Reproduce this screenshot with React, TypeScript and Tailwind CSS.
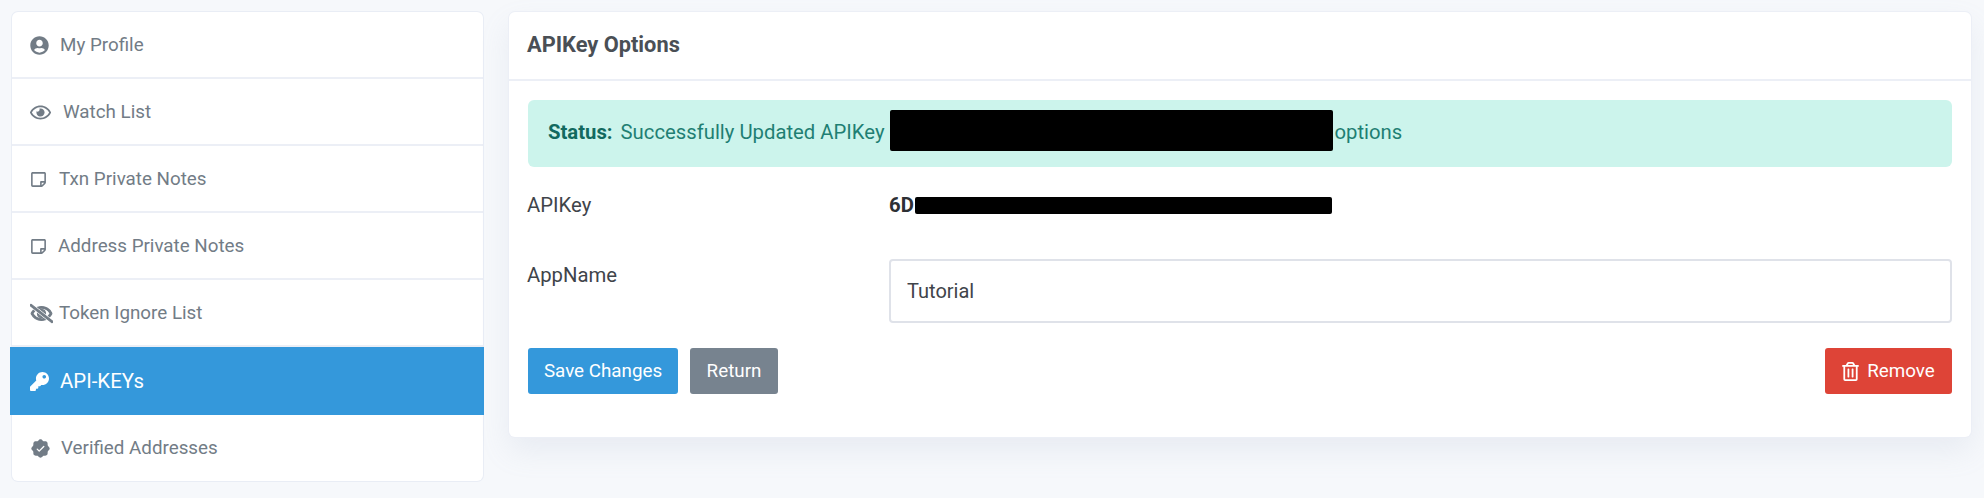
import React from "react";
import { FaUserCircle, FaRegEye, FaRegStickyNote, FaRegEyeSlash, FaKey, FaRegTrashAlt } from "react-icons/fa";
import { PiSealCheckFill } from "react-icons/pi";

const items = [
  { label: "My Profile", icon: <FaUserCircle className="h-[19px] w-[19px]" />, gap: "gap-[11px]", h: "h-[67px]" },
  { label: "Watch List", icon: <FaRegEye className="h-[21px] w-[21px]" />, gap: "gap-[12px]", h: "h-[67px]" },
  { label: "Txn Private Notes", icon: <FaRegStickyNote className="h-[17px] w-[17px]" />, gap: "gap-[12px]", h: "h-[67px]" },
  { label: "Address Private Notes", icon: <FaRegStickyNote className="h-[17px] w-[17px]" />, gap: "gap-[11px]", h: "h-[67px]" },
  { label: "Token Ignore List", icon: <FaRegEyeSlash className="h-[21px] w-[23px]" stroke="currentColor" strokeWidth={30} />, gap: "gap-[6px]", h: "h-[67px]" },
  { label: "API-KEYs", icon: <FaKey className="h-[19px] w-[19px]" />, gap: "gap-[11px]", h: "h-[68px]", active: true },
  { label: "Verified Addresses", icon: <PiSealCheckFill className="h-[21px] w-[21px]" />, gap: "gap-[10px]", h: "h-[66px]" },
];

export default function App() {
  return (
    <div className="flex h-[498px] w-[1984px] items-start gap-[26px] bg-[#f6f8fb] py-[12px] pl-[12px] pr-[13px] font-['Roboto',sans-serif] text-[18.8px] text-[#4a4f55]">
      <nav className="flex w-[471px] shrink-0 flex-col rounded-[6px] bg-white shadow-[0_0_0_1px_#e9edf5]">
        {items.map((it) => (
          <a
            key={it.label}
            className={
              it.active
                ? `-ml-[2px] -mr-[1px] flex ${it.h} items-center ${it.gap} bg-[#3498db] pl-[20px] text-[20.4px] text-white`
                : `flex ${it.h} items-center ${it.gap} border-b-2 border-[#eceff6] pl-[18px] pt-[1px] text-[#727c86] last:border-b-0`
            }
          >
            {it.icon}
            <span>{it.label}</span>
          </a>
        ))}
      </nav>

      <main className="flex h-[425px] flex-1 flex-col rounded-[6px] bg-white shadow-[0_0_0_1px_#eceff6,0_14px_30px_rgba(150,160,190,0.14)]">
        <header className="flex h-[69px] shrink-0 items-center border-b-2 border-[#eceff6] px-[18px] text-[21.8px] font-bold text-[#4a4f55]">
          APIKey Options
        </header>
        <div className="flex flex-1 flex-col px-[19px] pt-[19px] text-[20.3px]">
          <div className="flex h-[67px] items-center whitespace-nowrap rounded-[6px] bg-[#ccf4ec] pb-[2px] pl-[20px] text-[#1f7f73]">
            <strong className="font-bold text-[#12695f]">Status:</strong>
            <span className="ml-[8px]">Successfully Updated APIKey</span>
            <span className="mb-[5px] ml-[5px] h-[41px] w-[443px] rounded-[2px] bg-black" />
            <span className="ml-[2px]">options</span>
          </div>

          <div className="-ml-px mt-[30px] flex h-[17px] items-center">
            <span className="w-[362px] text-[#3f444a]">APIKey</span>
            <strong className="font-bold text-[#2d3035]">6D</strong>
            <span className="ml-[1px] h-[17px] w-[417px] rounded-[2px] bg-black" />
          </div>

          <div className="-ml-px mt-[45px] flex items-start">
            <label className="w-[362px] pt-[1px] text-[#3f444a]">AppName</label>
            <input
              readOnly
              value="Tutorial"
              className="h-[64px] flex-1 rounded-[4px] border-2 border-[#dfe2e9] px-[16px] text-[20px] text-[#3f444a] outline-none"
            />
          </div>

          <div className="mt-[25px] flex items-center text-[18.8px]">
            <button className="h-[46px] w-[150px] rounded-[3px] bg-[#3498db] text-white">Save Changes</button>
            <button className="ml-[12px] h-[46px] w-[88px] rounded-[3px] bg-[#77838f] text-white">Return</button>
            <button className="ml-auto flex h-[46px] w-[127px] items-center justify-center gap-[8px] rounded-[3px] bg-[#de4437] text-white">
              <FaRegTrashAlt className="h-[19px] w-[17px]" />
              Remove
            </button>
          </div>
        </div>
      </main>
    </div>
  );
}
